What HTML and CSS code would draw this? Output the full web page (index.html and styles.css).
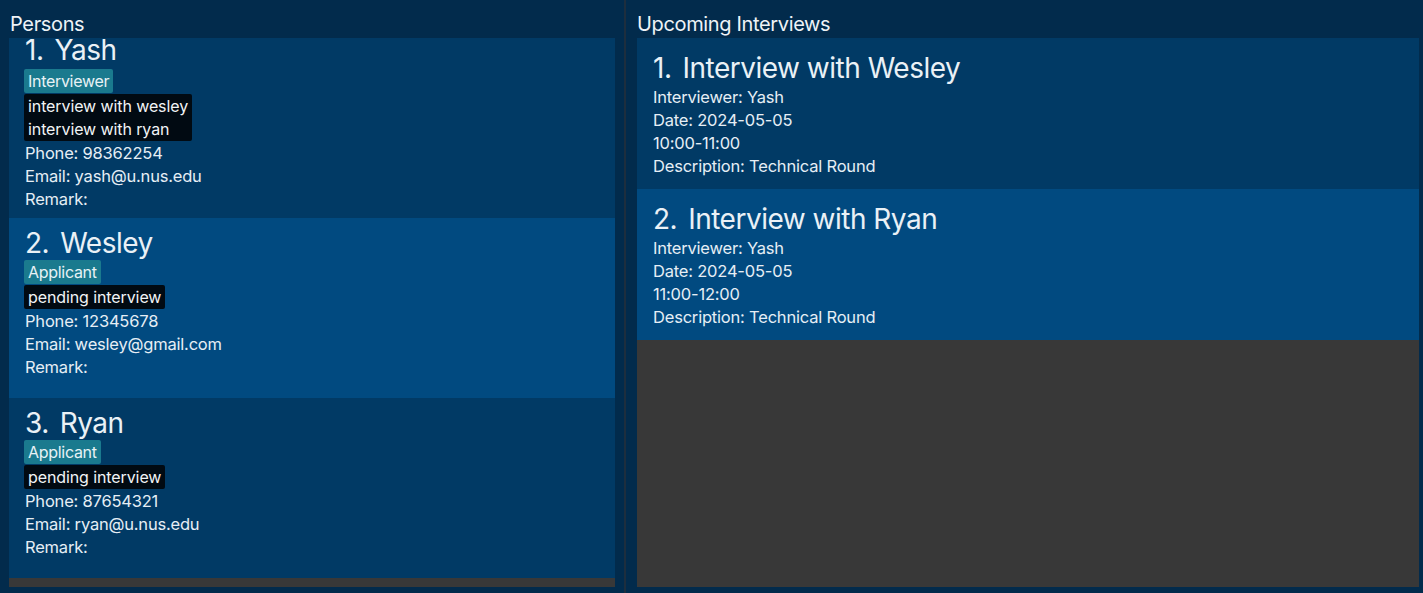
FILE: index.html
```html
<!DOCTYPE html>
<html>
<head>
<meta charset="utf-8">
<title>Persons</title>
<link rel="stylesheet" href="styles.css">
</head>
<body>
<div class="app">
  <section class="pane pane-left">
    <h2 class="pane-title">Persons</h2>
    <div class="list">
      <div class="card card-odd card-first">
        <div class="name"><span class="idx">1.</span><span>Yash</span></div>
        <div class="tag">Interviewer</div>
        <div class="notes">interview with wesley<br>interview with ryan</div>
        <div class="detail">Phone: 98362254</div>
        <div class="detail">Email: yash@u.nus.edu</div>
        <div class="detail">Remark:</div>
      </div>
      <div class="card card-even">
        <div class="name"><span class="idx">2.</span><span>Wesley</span></div>
        <div class="tag">Applicant</div>
        <div class="notes">pending interview</div>
        <div class="detail">Phone: 12345678</div>
        <div class="detail">Email: wesley@gmail.com</div>
        <div class="detail">Remark:</div>
      </div>
      <div class="card card-odd">
        <div class="name"><span class="idx">3.</span><span>Ryan</span></div>
        <div class="tag">Applicant</div>
        <div class="notes">pending interview</div>
        <div class="detail">Phone: 87654321</div>
        <div class="detail">Email: ryan@u.nus.edu</div>
        <div class="detail">Remark:</div>
      </div>
    </div>
  </section>
  <div class="divider"></div>
  <section class="pane pane-right">
    <h2 class="pane-title">Upcoming Interviews</h2>
    <div class="list">
      <div class="icard card-odd">
        <div class="name"><span class="idx">1.</span><span>Interview with Wesley</span></div>
        <div class="detail">Interviewer: Yash</div>
        <div class="detail">Date: 2024-05-05</div>
        <div class="detail">10:00-11:00</div>
        <div class="detail">Description: Technical Round</div>
      </div>
      <div class="icard card-even">
        <div class="name"><span class="idx">2.</span><span>Interview with Ryan</span></div>
        <div class="detail">Interviewer: Yash</div>
        <div class="detail">Date: 2024-05-05</div>
        <div class="detail">11:00-12:00</div>
        <div class="detail">Description: Technical Round</div>
      </div>
    </div>
  </section>
</div>
</body>
</html>
```
FILE: styles.css
```css
* { box-sizing: border-box; }
html, body {
  margin: 0;
  padding: 0;
  width: 1423px;
  height: 593px;
  overflow: hidden;
  background: #022b4c;
}
body {
  font-family: Inter, "Noto Sans", sans-serif;
  color: #e6eef5;
}
.app {
  display: flex;
  height: 593px;
}
.pane {
  display: flex;
  flex-direction: column;
  padding-bottom: 6px;
}
.pane-left {
  width: 615px;
  padding-left: 9px;
}
.pane-right {
  width: 782px;
}
.divider {
  width: 2px;
  margin: 0 11px 0 9px;
  background: #1d2e3e;
}
.pane-title {
  margin: 0;
  height: 38px;
  padding-top: 12px;
  font-size: 20px;
  line-height: 24px;
  font-weight: 400;
  letter-spacing: -0.35px;
  color: #eef3f7;
}
.pane-left .pane-title { padding-left: 1px; }
.list {
  flex: 1;
  background: #383838;
}
.card-odd { background: #013a65; }
.card-even { background: #014a80; }
.card {
  height: 180px;
  padding: 8px 15px 0;
}
.name {
  display: flex;
  gap: 11px;
  font-size: 28px;
  line-height: 34px;
  height: 34px;
  letter-spacing: -0.5px;
  color: #eaf1f6;
  white-space: nowrap;
}
.card-first {
  padding-top: 1px;
}
.card-first .name {
  line-height: 23px;
  height: 23px;
  margin-bottom: 7px;
}
.idx { padding-left: 1px; }
.tag {
  display: table;
  height: 24px;
  padding: 0 4px;
  font-size: 16px;
  line-height: 24px;
  letter-spacing: -0.3px;
  background: #1a7a8e;
  border-radius: 2px;
  color: #e8f2f5;
}
.notes {
  display: table;
  margin-top: 1px;
  margin-bottom: 1px;
  padding: 1px 4px 0;
  font-size: 16px;
  line-height: 23px;
  letter-spacing: -0.1px;
  background: #010a12;
  border-radius: 2px;
  color: #f1f4f6;
}
.detail {
  font-size: 16.5px;
  line-height: 23px;
  height: 23px;
  padding-left: 1px;
  letter-spacing: -0.2px;
  white-space: nowrap;
}
.icard {
  padding: 13px 15px 11px;
}
.icard .name {
  margin-bottom: 1px;
}
```
